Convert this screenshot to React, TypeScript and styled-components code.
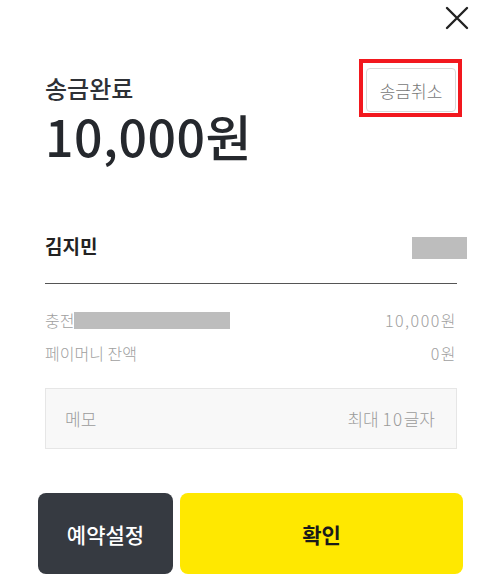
import styled, { createGlobalStyle } from "styled-components";

const GlobalStyle = createGlobalStyle`
  * { box-sizing: border-box; }
  html, body {
    margin: 0;
    padding: 0;
    background: #fff;
    font-family: "Noto Sans CJK KR", "Noto Sans", sans-serif;
  }
`;

const Page = styled.div`
  width: 488px;
  height: 588px;
  background: #fff;
  position: relative;
  overflow: hidden;
`;

const TopBar = styled.div`
  display: flex;
  justify-content: flex-end;
  padding: 6px 19px 0 0;
  height: 59px;
`;

const CloseButton = styled.button`
  width: 24px;
  height: 24px;
  padding: 0;
  border: none;
  background: none;
  display: flex;
  align-items: center;
  justify-content: center;
  cursor: pointer;
`;

const Content = styled.div`
  padding: 0 31px 0 45px;
`;

const Summary = styled.div`
  display: flex;
  justify-content: space-between;
  align-items: flex-start;
`;

const Title = styled.h2`
  margin: 14px 0 0;
  font-size: 24px;
  line-height: 30px;
  font-weight: 500;
  color: #2e3136;
`;

const Amount = styled.div`
  margin-top: 2px;
  font-size: 50px;
  line-height: 60px;
  font-weight: 500;
  color: #25282d;
  letter-spacing: 0.5px;
`;

const Highlight = styled.div`
  border: 4px solid #f2181e;
  padding: 5px 2px 1px 3px;
  margin-right: -5px;
`;

const CancelButton = styled.button`
  width: 90px;
  height: 44px;
  border: 1px solid #d9d9d9;
  border-radius: 4px;
  background: #fff;
  font-family: inherit;
  font-size: 17px;
  font-weight: 300;
  color: #777;
  padding: 0;
`;

const Recipient = styled.div`
  margin-top: 71px;
  display: flex;
  justify-content: space-between;
  align-items: flex-start;
  height: 48px;
  border-bottom: 1px solid #555;
`;

const Name = styled.span`
  font-size: 19px;
  line-height: 20px;
  font-weight: 700;
  color: #222;
`;

const Redacted = styled.span<{ $w: number; $h: number }>`
  display: inline-block;
  width: ${(p) => p.$w}px;
  height: ${(p) => p.$h}px;
  background: #bdbdbd;
`;

const NameRedacted = styled(Redacted)`
  margin: 1px -10px 0 0;
`;

const Details = styled.div`
  margin-top: 24px;
  display: flex;
  flex-direction: column;
  gap: 9px;
`;

const DetailRow = styled.div`
  display: flex;
  justify-content: space-between;
  align-items: center;
  font-size: 16px;
  line-height: 24px;
  font-weight: 300;
  color: #a0a0a0;
`;

const Label = styled.span`
  display: flex;
  align-items: center;
`;

const Num = styled.span`
  letter-spacing: 1.5px;
`;

const MemoBox = styled.div`
  margin-top: 23px;
  height: 61px;
  background: #f8f8f8;
  border: 1px solid #e6e6e6;
  display: flex;
  justify-content: space-between;
  align-items: center;
  padding: 0 21px 0 19px;
  font-size: 17px;
  font-weight: 300;
  color: #9b9b9b;
`;

const Actions = styled.div`
  position: absolute;
  left: 38px;
  right: 25px;
  top: 493px;
  display: flex;
  gap: 7px;
`;

const ActionButton = styled.button<{ $primary?: boolean }>`
  height: 81px;
  border: none;
  border-radius: 8px;
  font-family: inherit;
  font-size: 21px;
  font-weight: ${(p) => (p.$primary ? 700 : 500)};
  background: ${(p) => (p.$primary ? "#ffe800" : "#363a41")};
  color: ${(p) => (p.$primary ? "#1a1a1a" : "#fff")};
  flex: ${(p) => (p.$primary ? 1 : "0 0 135px")};
  padding: 0;
`;

export default function App() {
  return (
    <Page>
      <GlobalStyle />
      <TopBar>
        <CloseButton aria-label="닫기">
          <svg width="24" height="24" viewBox="0 0 24 24">
            <path d="M2 2 L22 22 M22 2 L2 22" stroke="#222" strokeWidth="2.4" strokeLinecap="round" />
          </svg>
        </CloseButton>
      </TopBar>
      <Content>
        <Summary>
          <div>
            <Title>송금완료</Title>
            <Amount>10,000원</Amount>
          </div>
          <Highlight>
            <CancelButton>송금취소</CancelButton>
          </Highlight>
        </Summary>
        <Recipient>
          <Name>김지민</Name>
          <NameRedacted $w={55} $h={22} />
        </Recipient>
        <Details>
          <DetailRow>
            <Label>
              충전
              <Redacted $w={156} $h={17} />
            </Label>
            <Num>10,000원</Num>
          </DetailRow>
          <DetailRow>
            <Label>페이머니 잔액</Label>
            <Num>0원</Num>
          </DetailRow>
        </Details>
        <MemoBox>
          <span>메모</span>
          <span>
            최대 <Num>10</Num>글자
          </span>
        </MemoBox>
      </Content>
      <Actions>
        <ActionButton>예약설정</ActionButton>
        <ActionButton $primary>확인</ActionButton>
      </Actions>
    </Page>
  );
}
